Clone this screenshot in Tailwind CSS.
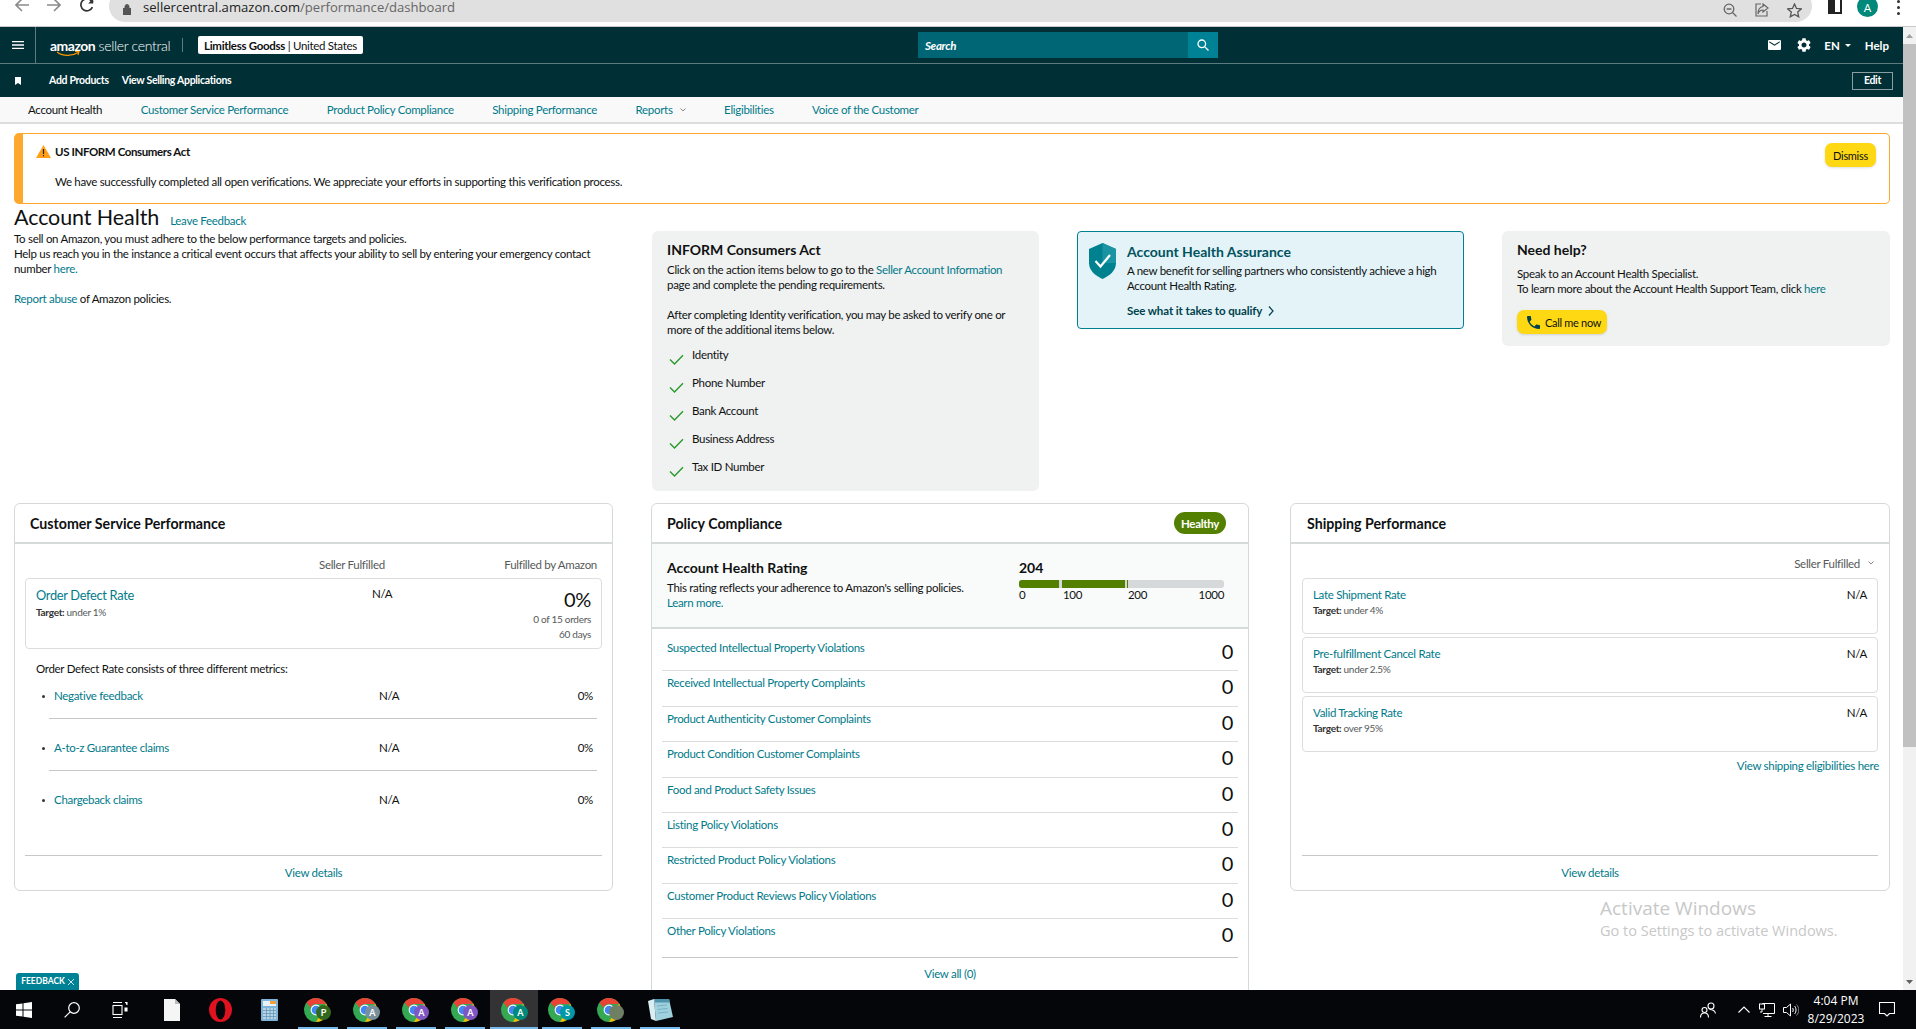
<!DOCTYPE html>
<html lang="en">
<head>
  <meta charset="UTF-8">
  <meta name="viewport" content="width=device-width, initial-scale=1.0">
  <title>Account Health</title>
  <script src="https://cdn.jsdelivr.net/npm/@tailwindcss/browser@4"></script>
</head>
<body>

<svg class="hidden">
  <symbol id="chrome" viewBox="0 0 24 24">
    <circle cx="12" cy="12" r="12" fill="#34a853"/>
    <path d="M12 0a12 12 0 0 1 10.4 6H12a6 6 0 0 0-5.6 3.8L2.6 4.4A12 12 0 0 1 12 0z" fill="#ea4335"/>
    <path d="M22.4 6A12 12 0 0 1 12 24l5.2-9A6 6 0 0 0 17.2 9z" fill="#fbbc04"/>
    <circle cx="12" cy="12" r="5.4" fill="#fff"/>
    <circle cx="12" cy="12" r="4.3" fill="#4285f4"/>
  </symbol>
  <symbol id="check" viewBox="0 0 15 11">
    <path d="M1 5.5 5.5 10 14 1.2" fill="none" stroke="#2a9a2a" stroke-width="1.4"/>
  </symbol>
</svg>

<div class="flex flex-col w-[1916px] h-[1029px] overflow-hidden relative bg-white text-[#0f1111] text-[11.5px] leading-[15px] tracking-[-0.3px] [font-family:Lato,sans-serif]">

  <!-- browser toolbar -->
  <div class="flex items-start h-[27px] shrink-0 border-b border-[#c9c9c9] overflow-hidden tracking-normal">
    <svg class="w-[14px] h-[14px] ml-[15px] mt-[-2px]" viewBox="0 0 14 14" fill="none" stroke="#8a8a8a" stroke-width="1.6"><path d="M14 7H1M7 1 1 7l6 6"/></svg>
    <svg class="w-[14px] h-[14px] ml-[18px] mt-[-2px]" viewBox="0 0 14 14" fill="none" stroke="#8a8a8a" stroke-width="1.6"><path d="M0 7h13M7 1l6 6-6 6"/></svg>
    <svg class="w-[14px] h-[14px] ml-[19px] mt-[-2px]" viewBox="0 0 14 14" fill="none" stroke="#333" stroke-width="1.7"><path d="M12.4 9.2A6 6 0 1 1 11.2 2.6L13 4.4"/><path d="M13.2.4v5h-5z" fill="#333" stroke="none"/></svg>
    <div class="flex items-center w-[1703px] h-[32px] mt-[-10px] ml-[15px] rounded-[16px] bg-[#e0e0e0]">
      <svg class="w-[8px] h-[11px] ml-[14px] mt-[7px]" viewBox="0 0 8 11"><path d="M0 4.5h8V11H0zM2 4.5V2.6a2 2 0 0 1 4 0v1.9" fill="#555" stroke="#555"/></svg>
      <span class="ml-[12px] mt-[3px] text-[13.1px] text-[#222] [font-family:'Open_Sans',sans-serif]">sellercentral.amazon.com<span class="text-[#666]">/performance/dashboard</span></span>
      <div class="flex items-center ml-auto mt-[8px] mr-[10px] gap-[18px]">
        <svg class="w-[14px] h-[14px]" viewBox="0 0 14 14" fill="none" stroke="#666" stroke-width="1.3"><circle cx="6" cy="6" r="4.8"/><path d="M3.6 6h4.8M9.5 9.5 13.5 13.500"/></svg>
        <svg class="w-[14px] h-[14px]" viewBox="0 0 14 14" fill="none" stroke="#666" stroke-width="1.2"><path d="M6 1H1v12h11V8M8 1l5 4-5 4V7C6 7 4 8 3 11c0-4 2-7 5-7.500z"/></svg>
        <svg class="w-[15px] h-[15px]" viewBox="0 0 15 15" fill="none" stroke="#555" stroke-width="1.3"><path d="m7.500 1 2 4.400 4.800.5-3.600 3.200 1 4.700-4.200-2.400-4.200 2.400 1-4.700L.7 5.900l4.800-.5z"/></svg>
      </div>
    </div>
    <div class="w-[14px] h-[16px] ml-[16px] mt-[-2px] border-[2px] border-[#222] border-l-[7px]"></div>
    <div class="flex items-center justify-center w-[21px] h-[21px] ml-[15px] mt-[-4px] pt-[2px] rounded-full bg-[#00897b] text-white text-[11px]">A</div>
    <div class="flex flex-col gap-[3px] ml-[19px] mt-[0px]">
      <div class="w-[3px] h-[3px] rounded-full bg-[#333]"></div>
      <div class="w-[3px] h-[3px] rounded-full bg-[#333]"></div>
      <div class="w-[3px] h-[3px] rounded-full bg-[#333]"></div>
    </div>
  </div>

  <div class="flex flex-1 min-h-0">
    <div class="w-[1903px] shrink-0 overflow-hidden">

      <!-- top header -->
      <header class="flex items-center h-[37px] border-b border-[#5d7a7f] bg-[#002f36] text-white">
        <div class="flex items-center justify-center w-[36px] h-full border-r border-[#5d7a7f]">
          <svg class="w-[12px] h-[8px]" viewBox="0 0 12 8" fill="#fff"><path d="M0 0h12v1.300H0zM0 3.350h12v1.300H0zM0 6.700h12V8H0z"/></svg>
        </div>
        <div class="relative ml-[14px] w-[120px] text-[14px] tracking-[-0.3px] whitespace-nowrap">
          <span class="font-bold tracking-[-0.5px]">amazon</span> <span class="font-light">seller central</span>
          <svg class="absolute left-[7px] top-[13px] w-[24px] h-[6px]" viewBox="0 0 24 6" fill="none" stroke="#ff9900" stroke-width="1.200"><path d="M0 1c6 4.500 15 4.500 21 .5M18 .5l4 0-1 3.500"/></svg>
        </div>
        <div class="w-px h-[14px] ml-[12px] bg-[#5d7a7f]"></div>
        <div class="flex items-center justify-center w-[165px] h-[18px] ml-[15px] rounded-[2px] bg-white text-[#0f1111] whitespace-nowrap"><b>Limitless Goodss</b>&nbsp;|&nbsp;United States</div>
        <div class="flex ml-[555px]">
          <div class="flex items-center w-[270px] h-[26px] pl-[7px] bg-[#006574] italic font-bold">Search</div>
          <div class="flex items-center justify-center w-[30px] h-[26px] bg-[#008296]">
            <svg class="w-[12px] h-[12px]" viewBox="0 0 12 12" fill="none" stroke="#fff" stroke-width="1.300"><circle cx="4.800" cy="4.800" r="3.800"/><path d="m7.600 7.600 3.900 3.900"/></svg>
          </div>
        </div>
        <div class="flex items-center ml-auto pr-[14px] font-bold tracking-normal">
          <svg class="w-[13px] h-[10px]" viewBox="2 4 20 16" preserveAspectRatio="none" fill="#fff"><path d="M20 4H4c-1.100 0-2 .9-2 2v12c0 1.100.9 2 2 2h16c1.100 0 2-.9 2-2V6c0-1.100-.9-2-2-2zm0 4-8 5-8-5V6l8 5 8-5v2z"/></svg>
          <svg class="w-[14px] h-[14px] ml-[16px]" viewBox="2 2 20 20" fill="#fff"><path d="M19.140 12.940c.04-.3.06-.61.06-.94 0-.32-.02-.64-.07-.94l2.030-1.580a.49.49 0 0 0 .12-.61l-1.920-3.320a.488.488 0 0 0-.59-.22l-2.390.96c-.5-.38-1.030-.7-1.620-.94l-.36-2.540a.484.484 0 0 0-.48-.41h-3.840c-.24 0-.43.17-.47.41l-.36 2.540c-.59.24-1.130.57-1.620.94l-2.390-.96c-.22-.08-.47 0-.59.22L2.740 8.870c-.12.21-.08.47.12.61l2.030 1.580c-.05.3-.09.63-.09.94s.02.64.07.94l-2.030 1.580a.49.49 0 0 0-.12.61l1.920 3.320c.12.22.37.29.59.22l2.390-.96c.5.38 1.030.7 1.620.94l.36 2.540c.05.24.24.41.48.41h3.840c.24 0 .44-.17.47-.41l.36-2.540c.59-.24 1.130-.56 1.620-.94l2.390.96c.22.08.47 0 .59-.22l1.920-3.320c.12-.22.07-.47-.12-.61l-2.010-1.580zM12 15.600c-1.980 0-3.600-1.620-3.600-3.600s1.620-3.600 3.600-3.600 3.600 1.620 3.600 3.600-1.620 3.600-3.600 3.600z"/></svg>
          <span class="ml-[13px]">EN</span>
          <svg class="w-[6px] h-[3px] ml-[5px]" viewBox="0 0 6 3" fill="#fff"><path d="M0 0h6L3 3z"/></svg>
          <span class="ml-[14px]">Help</span>
        </div>
      </header>

      <!-- favorites bar -->
      <div class="flex items-center h-[33px] bg-[#002f36] text-white font-bold text-[10.5px]">
        <svg class="w-[6px] h-[8px] ml-[15px]" viewBox="0 0 6 8" fill="#fff"><path d="M0 0h6v8L3 6 0 8z"/></svg>
        <span class="ml-[28px]">Add Products</span>
        <span class="ml-[13px]">View Selling Applications</span>
        <div class="flex items-center justify-center w-[41px] h-[18px] ml-auto mr-[10px] border border-[#8a9ea2]">Edit</div>
      </div>

      <!-- tabs -->
      <nav class="flex items-center gap-[38.500px] h-[27px] pl-[28px] bg-[#f9f9f9] border-b-2 border-[#dddddd] text-[#007a8a] whitespace-nowrap">
        <span class="text-[#0f1111]">Account Health</span>
        <span>Customer Service Performance</span>
        <span>Product Policy Compliance</span>
        <span>Shipping Performance</span>
        <span class="flex items-center">Reports
          <svg class="w-[6px] h-[4px] ml-[7px]" viewBox="0 0 6 4" fill="none" stroke="#888"><path d="m.5.5 2.500 2.500L5.500.5"/></svg>
        </span>
        <span>Eligibilities</span>
        <span>Voice of the Customer</span>
      </nav>

      <main class="pl-[14px] pr-[13px]">
        <!-- alert -->
        <div class="relative h-[71px] mt-[9px] pl-[32px] pt-[10px] border border-l-[9px] border-[#ffa82e] rounded-[5px]">
          <svg class="absolute left-[13px] top-[11px] w-[15px] h-[13px]" viewBox="0 0 15 13"><path d="M7.500 0 15 13H0z" fill="#ff9f1a"/><path d="M6.900 4h1.200v5H6.900zM6.900 10h1.200v1.300H6.900z" fill="#222"/></svg>
          <div class="font-bold tracking-[-0.4px]">US INFORM Consumers Act</div>
          <div class="mt-[15px]">We have successfully completed all open verifications. We appreciate your efforts in supporting this verification process.</div>
          <div class="absolute right-[13px] top-[9px] flex items-center justify-center w-[51px] h-[24px] rounded-[7px] bg-[#ffd814] text-[11px] shadow-sm">Dismiss</div>
        </div>

        <!-- intro row -->
        <div class="flex items-start gap-[38px]">
          <div class="w-[600px]">
            <div class="flex items-end h-[26px]">
              <h1 class="text-[21.500px] leading-[26px] tracking-[-0.1px]">Account Health</h1>
              <span class="ml-[11px] mb-[2px] text-[#007a8a]">Leave Feedback</span>
            </div>
            <p class="mt-[1px]">To sell on Amazon, you must adhere to the below performance targets and policies.<br>Help us reach you in the instance a critical event occurs that affects your ability to sell by entering your emergency contact<br>number <span class="text-[#007a8a]">here.</span></p>
            <p class="mt-[15px]"><span class="text-[#007a8a]">Report abuse</span> of Amazon policies.</p>
          </div>

          <div class="w-[387px] h-[260px] mt-[27px] px-[15px] pt-[10px] rounded-[6px] bg-[#f0f1f1]">
            <h3 class="text-[14px] leading-[17px] font-bold tracking-normal">INFORM Consumers Act</h3>
            <p class="mt-[4px]">Click on the action items below to go to the <span class="text-[#007a8a]">Seller Account Information</span><br>page and complete the pending requirements.</p>
            <p class="mt-[15px]">After completing Identity verification, you may be asked to verify one or<br>more of the additional items below.</p>
            <ul class="mt-[10px]">
              <li class="flex h-[28px]"><svg class="w-[15px] h-[11px] mt-[7px] ml-[2px]"><use href="#check"/></svg><span class="ml-[8px]">Identity</span></li>
              <li class="flex h-[28px]"><svg class="w-[15px] h-[11px] mt-[7px] ml-[2px]"><use href="#check"/></svg><span class="ml-[8px]">Phone Number</span></li>
              <li class="flex h-[28px]"><svg class="w-[15px] h-[11px] mt-[7px] ml-[2px]"><use href="#check"/></svg><span class="ml-[8px]">Bank Account</span></li>
              <li class="flex h-[28px]"><svg class="w-[15px] h-[11px] mt-[7px] ml-[2px]"><use href="#check"/></svg><span class="ml-[8px]">Business Address</span></li>
              <li class="flex h-[28px]"><svg class="w-[15px] h-[11px] mt-[7px] ml-[2px]"><use href="#check"/></svg><span class="ml-[8px]">Tax ID Number</span></li>
            </ul>
          </div>

          <div class="flex w-[387px] h-[98px] mt-[27px] pl-[11px] pt-[11px] border border-[#007f93] rounded-[4px] bg-[#e3f3f8]">
            <svg class="w-[27px] h-[36px] shrink-0" viewBox="0 0 27 36">
              <path d="M13.500 0 27 6v14c0 8-7 13-13.500 16C7 33 0 28 0 20V6z" fill="#00818f"/>
              <path d="M13.500 0 27 6v14H13.500z" fill="#1a94a3"/>
              <path d="m6.500 18 5 5.500L21 12" fill="none" stroke="#fff" stroke-width="2.200"/>
            </svg>
            <div class="ml-[11px]">
              <h3 class="text-[14px] leading-[17px] font-bold tracking-normal text-[#00525e]">Account Health Assurance</h3>
              <p class="mt-[3px]">A new benefit for selling partners who consistently achieve a high<br>Account Health Rating.</p>
              <div class="flex items-center mt-[10px] font-bold tracking-[-0.1px] text-[#00424c]">See what it takes to qualify
                <svg class="w-[6px] h-[10px] ml-[6px]" viewBox="0 0 6 10" fill="none" stroke="#00424c" stroke-width="1.300"><path d="m1 .5 4 4.500-4 4.500"/></svg>
              </div>
            </div>
          </div>

          <div class="w-[388px] h-[115px] mt-[27px] px-[15px] pt-[10px] rounded-[6px] bg-[#f0f1f1]">
            <h3 class="text-[14px] leading-[17px] font-bold tracking-normal">Need help?</h3>
            <p class="mt-[8px]">Speak to an Account Health Specialist.<br>To learn more about the Account Health Support Team, click <span class="text-[#007a8a]">here</span></p>
            <div class="flex items-center w-[90px] h-[24px] mt-[14px] pl-[10px] rounded-[7px] bg-[#ffd814] text-[11px] shadow-sm">
              <svg class="w-[13px] h-[13px] mr-[5px]" viewBox="3 3 18 18" fill="#00424c"><path d="M6.620 10.790c1.440 2.830 3.760 5.140 6.590 6.590l2.200-2.200c.27-.27.67-.36 1.020-.24 1.120.37 2.330.57 3.570.57.55 0 1 .45 1 1V20c0 .55-.45 1-1 1-9.390 0-17-7.610-17-17 0-.55.45-1 1-1h3.500c.55 0 1 .45 1 1 0 1.250.2 2.450.57 3.570.11.35.03.74-.25 1.020l-2.200 2.200z"/></svg>
              Call me now
            </div>
          </div>
        </div>

        <!-- metric cards -->
        <div class="flex items-start mt-[12px]">

          <section class="flex flex-col w-[599px] h-[388px] border border-[#d5d9d9] rounded-[6px]">
            <div class="flex items-center h-[40px] shrink-0 pl-[15px] border-b-2 border-[#d5dbdb]">
              <h2 class="text-[14.200px] font-bold tracking-normal">Customer Service Performance</h2>
            </div>
            <div class="flex h-[34px] shrink-0 pt-[13px] text-[#565959]">
              <span class="ml-[304px]">Seller Fulfilled</span>
              <span class="ml-auto mr-[15px]">Fulfilled by Amazon</span>
            </div>
            <div class="flex h-[71px] shrink-0 mx-[10px] px-[10px] border border-[#dddddd] rounded-[4px]">
              <div class="w-[336px] pt-[9px]">
                <div class="text-[12.800px] text-[#007a8a]">Order Defect Rate</div>
                <div class="mt-[2px] text-[10px] text-[#565959]"><b class="text-[#333]">Target:</b> under 1%</div>
              </div>
              <div class="pt-[7px]">N/A</div>
              <div class="ml-auto pt-[8px] text-right text-[10px] text-[#565959]">
                <div class="text-[20px] leading-[24px] text-[#0f1111]">0%</div>
                <div class="mt-[1px]">0 of 15 orders</div>
                <div>60 days</div>
              </div>
            </div>
            <div class="mt-[12px] ml-[21px]">Order Defect Rate consists of three different metrics:</div>
            <ul class="mt-[12px]">
              <li class="flex h-[31px] ml-[34px] mr-[15px] border-b border-[#c4c8c8]">
                <span class="w-[330px] pl-[5px] text-[#007a8a]"><span class="inline-block w-[3px] h-[3px] mr-[9px] ml-[-12px] mb-[2px] rounded-full bg-[#333]"></span>Negative feedback</span><span>N/A</span><span class="ml-auto mr-[4px]">0%</span>
              </li>
              <li class="flex h-[52px] pt-[21px] ml-[34px] mr-[15px] border-b border-[#c4c8c8]">
                <span class="w-[330px] pl-[5px] text-[#007a8a]"><span class="inline-block w-[3px] h-[3px] mr-[9px] ml-[-12px] mb-[2px] rounded-full bg-[#333]"></span>A-to-z Guarantee claims</span><span>N/A</span><span class="ml-auto mr-[4px]">0%</span>
              </li>
              <li class="flex h-[52px] pt-[21px] ml-[34px] mr-[15px]">
                <span class="w-[330px] pl-[5px] text-[#007a8a]"><span class="inline-block w-[3px] h-[3px] mr-[9px] ml-[-12px] mb-[2px] rounded-full bg-[#333]"></span>Chargeback claims</span><span>N/A</span><span class="ml-auto mr-[4px]">0%</span>
              </li>
            </ul>
            <div class="flex items-center justify-center h-[35px] pb-[2px] mt-auto mx-[10px] border-t border-[#c4c8c8] text-[#007a8a]">View details</div>
          </section>

          <section class="w-[598px] h-[520px] ml-[38px] border border-[#d5d9d9] rounded-t-[6px]">
            <div class="flex items-center justify-between h-[40px] px-[15px] pr-[22px] border-b-2 border-[#d5dbdb]">
              <h2 class="text-[14.200px] font-bold tracking-normal">Policy Compliance</h2>
              <span class="flex items-center justify-center w-[52px] h-[22px] rounded-full bg-[#538000] text-white font-bold">Healthy</span>
            </div>
            <div class="flex h-[85px] px-[15px] pt-[15px] bg-[#f9fafa] border-b-2 border-[#d5dbdb]">
              <div class="w-[352px]">
                <h3 class="text-[14px] leading-[17px] font-bold tracking-normal">Account Health Rating</h3>
                <p class="mt-[4px]">This rating reflects your adherence to Amazon's selling policies.<br><span class="text-[#007a8a]">Learn more.</span></p>
              </div>
              <div class="w-[205px]">
                <div class="text-[14px] leading-[17px] font-bold tracking-normal">204</div>
                <div class="flex h-[8px] mt-[4px] rounded-[3px] overflow-hidden bg-[#d5d9d9]">
                  <div class="w-[40px] bg-[#538000]"></div>
                  <div class="w-[63px] ml-[3px] bg-[#538000]"></div>
                  <div class="w-[1px] ml-[2px] bg-[#538000]"></div>
                </div>
                <div class="relative h-[12px] leading-[12px] mt-[1px]">
                  <span class="absolute left-0">0</span>
                  <span class="absolute left-[44px]">100</span>
                  <span class="absolute left-[109px]">200</span>
                  <span class="absolute right-0">1000</span>
                </div>
              </div>
            </div>
            <ul class="mx-[10px] pt-[7px] text-[#007a8a]">
              <li class="flex justify-between h-[35.400px] pt-[4px] px-[5px] border-b border-[#dddddd]">Suspected Intellectual Property Violations<span class="mt-[-1px] text-[20px] leading-[24px] text-[#0f1111]">0</span></li>
              <li class="flex justify-between h-[35.400px] pt-[4px] px-[5px] border-b border-[#dddddd]">Received Intellectual Property Complaints<span class="mt-[-1px] text-[20px] leading-[24px] text-[#0f1111]">0</span></li>
              <li class="flex justify-between h-[35.400px] pt-[4px] px-[5px] border-b border-[#dddddd]">Product Authenticity Customer Complaints<span class="mt-[-1px] text-[20px] leading-[24px] text-[#0f1111]">0</span></li>
              <li class="flex justify-between h-[35.400px] pt-[4px] px-[5px] border-b border-[#dddddd]">Product Condition Customer Complaints<span class="mt-[-1px] text-[20px] leading-[24px] text-[#0f1111]">0</span></li>
              <li class="flex justify-between h-[35.400px] pt-[4px] px-[5px] border-b border-[#dddddd]">Food and Product Safety Issues<span class="mt-[-1px] text-[20px] leading-[24px] text-[#0f1111]">0</span></li>
              <li class="flex justify-between h-[35.400px] pt-[4px] px-[5px] border-b border-[#dddddd]">Listing Policy Violations<span class="mt-[-1px] text-[20px] leading-[24px] text-[#0f1111]">0</span></li>
              <li class="flex justify-between h-[35.400px] pt-[4px] px-[5px] border-b border-[#dddddd]">Restricted Product Policy Violations<span class="mt-[-1px] text-[20px] leading-[24px] text-[#0f1111]">0</span></li>
              <li class="flex justify-between h-[35.400px] pt-[4px] px-[5px] border-b border-[#dddddd]">Customer Product Reviews Policy Violations<span class="mt-[-1px] text-[20px] leading-[24px] text-[#0f1111]">0</span></li>
              <li class="flex justify-between h-[39px] pt-[4px] px-[5px] border-b border-[#c4c8c8]">Other Policy Violations<span class="mt-[-1px] text-[20px] leading-[24px] text-[#0f1111]">0</span></li>
            </ul>
            <div class="flex items-center justify-center h-[30px] text-[#007a8a]">View all (0)</div>
          </section>

          <section class="flex flex-col w-[600px] h-[388px] ml-[41px] border border-[#d5d9d9] rounded-[6px]">
            <div class="flex items-center h-[40px] shrink-0 pl-[16px] border-b-2 border-[#d5dbdb]">
              <h2 class="text-[14.200px] font-bold tracking-normal">Shipping Performance</h2>
            </div>
            <div class="flex items-center justify-end h-[34px] shrink-0 pt-[4px] pr-[15px] text-[#565959]">Seller Fulfilled
              <svg class="w-[6px] h-[4px] ml-[8px]" viewBox="0 0 6 4" fill="none" stroke="#888"><path d="m.5.500 2.500 2.500L5.500.5"/></svg>
            </div>
            <div class="flex flex-col gap-[3px] mx-[11px]">
              <div class="flex h-[56px] px-[10px] pt-[8px] border border-[#dddddd] rounded-[4px]">
                <div class="w-[450px]"><div class="text-[#007a8a]">Late Shipment Rate</div><div class="mt-[1px] text-[10px] text-[#565959]"><b class="text-[#333]">Target:</b> under 4%</div></div>
                <span class="ml-auto">N/A</span>
              </div>
              <div class="flex h-[56px] px-[10px] pt-[8px] border border-[#dddddd] rounded-[4px]">
                <div class="w-[450px]"><div class="text-[#007a8a]">Pre-fulfillment Cancel Rate</div><div class="mt-[1px] text-[10px] text-[#565959]"><b class="text-[#333]">Target:</b> under 2.5%</div></div>
                <span class="ml-auto">N/A</span>
              </div>
              <div class="flex h-[56px] px-[10px] pt-[8px] border border-[#dddddd] rounded-[4px]">
                <div class="w-[450px]"><div class="text-[#007a8a]">Valid Tracking Rate</div><div class="mt-[1px] text-[10px] text-[#565959]"><b class="text-[#333]">Target:</b> over 95%</div></div>
                <span class="ml-auto">N/A</span>
              </div>
            </div>
            <div class="mt-[6px] mr-[10px] text-right text-[#007a8a]">View shipping eligibilities here</div>
            <div class="flex items-center justify-center h-[35px] pb-[2px] mt-auto mx-[11px] border-t border-[#c4c8c8] text-[#007a8a]">View details</div>
          </section>
        </div>
      </main>
    </div>

    <!-- scrollbar -->
    <div class="flex flex-col w-[13px] shrink-0 bg-[#f1f1f1]">
      <div class="flex items-center justify-center h-[17px]">
        <svg class="w-[7px] h-[4px]" viewBox="0 0 7 4" fill="#a0a0a0"><path d="M3.500 0 7 4H0z"/></svg>
      </div>
      <div class="h-[703px] bg-[#c1c1c1]"></div>
      <div class="flex items-center justify-center h-[17px] mt-auto">
        <svg class="w-[7px] h-[4px]" viewBox="0 0 7 4" fill="#606060"><path d="M0 0h7L3.500 4z"/></svg>
      </div>
    </div>
  </div>

  <!-- windows taskbar -->
  <div class="flex h-[39px] shrink-0 bg-[#05060a] text-white tracking-normal">
    <div class="flex items-center justify-center w-[48px]">
      <svg class="w-[16px] h-[16px]" viewBox="0 0 16 16" fill="#fff"><path d="M0 2.300 6.500 1.400V7.500H0zM7.500 1.200 16 0V7.500H7.500zM0 8.500h6.500v6.100L0 13.700zM7.500 8.500H16V16l-8.500-1.200z"/></svg>
    </div>
    <div class="flex items-center justify-center w-[48px]">
      <svg class="w-[16px] h-[16px]" viewBox="0 0 16 16" fill="none" stroke="#fff" stroke-width="1.200"><circle cx="10" cy="6" r="5.300"/><path d="M6.200 9.800 .6 15.400"/></svg>
    </div>
    <div class="flex items-center justify-center w-[48px]">
      <svg class="w-[16px] h-[16px]" viewBox="0 0 16 16" fill="none" stroke="#fff" stroke-width="1.100"><path d="M1 .5h9M1 15.500h9"/><rect x="1" y="3.500" width="9" height="9"/><path d="M13 .5h2v2.500M13 6h2v3h-2z" fill="#fff"/></svg>
    </div>
    <div class="flex items-center justify-center w-[49px] ml-[3px]">
      <svg class="w-[16px] h-[22px]" viewBox="0 0 16 22"><path d="M0 0h11l5 5v17H0z" fill="#f5f5f5"/><path d="M11 0v5h5z" fill="#bbb"/></svg>
    </div>
    <div class="flex items-center justify-center w-[49px]">
      <svg class="w-[23px] h-[24px]" viewBox="0 0 23 24"><ellipse cx="11.500" cy="12" rx="11.500" ry="12" fill="#e0121f"/><ellipse cx="11.500" cy="12" rx="4.800" ry="9.500" fill="#05060a"/></svg>
    </div>
    <div class="flex items-center justify-center w-[49px]">
      <svg class="w-[17px] h-[22px]" viewBox="0 0 17 22"><rect width="17" height="22" rx="1" fill="#7fb4d8"/><rect x="2" y="2" width="13" height="5" fill="#e8f2f8"/><path d="M9 2h6v3H9z" fill="#f0a040"/><path d="M2 9h13v11H2z" fill="#b6d4e6"/><path d="M2 11.500h13M2 14.500h13M2 17.500h13M5.500 9v11M9 9v11M12.500 9v11" stroke="#5b8fb3" stroke-width=".7"/></svg>
    </div>

    <div class="relative flex items-center justify-center w-[49px]">
      <svg class="w-[24px] h-[24px] mr-[5px]"><use href="#chrome"/></svg>
      <span class="absolute left-[22px] top-[15px] flex items-center justify-center w-[15px] h-[15px] rounded-full bg-[#33691e] text-[9px] font-bold">P</span>
      <div class="absolute left-[4px] right-[5px] bottom-0 h-[2px] bg-[#76b9ed]"></div>
    </div>
    <div class="relative flex items-center justify-center w-[49px]">
      <svg class="w-[24px] h-[24px] mr-[5px]"><use href="#chrome"/></svg>
      <span class="absolute left-[22px] top-[15px] flex items-center justify-center w-[15px] h-[15px] rounded-full bg-[#78909c] text-[9px] font-bold">A</span>
      <div class="absolute left-[4px] right-[5px] bottom-0 h-[2px] bg-[#76b9ed]"></div>
    </div>
    <div class="relative flex items-center justify-center w-[49px]">
      <svg class="w-[24px] h-[24px] mr-[5px]"><use href="#chrome"/></svg>
      <span class="absolute left-[22px] top-[15px] flex items-center justify-center w-[15px] h-[15px] rounded-full bg-[#7e57c2] text-[9px] font-bold">A</span>
      <div class="absolute left-[4px] right-[5px] bottom-0 h-[2px] bg-[#76b9ed]"></div>
    </div>
    <div class="relative flex items-center justify-center w-[49px]">
      <svg class="w-[24px] h-[24px] mr-[5px]"><use href="#chrome"/></svg>
      <span class="absolute left-[22px] top-[15px] flex items-center justify-center w-[15px] h-[15px] rounded-full bg-[#7e57c2] text-[9px] font-bold">A</span>
      <div class="absolute left-[4px] right-[5px] bottom-0 h-[2px] bg-[#76b9ed]"></div>
    </div>
    <div class="relative flex items-center justify-center w-[48px] bg-[#333336]">
      <svg class="w-[24px] h-[24px] mr-[2px]"><use href="#chrome"/></svg>
      <span class="absolute left-[23px] top-[15px] flex items-center justify-center w-[15px] h-[15px] rounded-full bg-[#00897b] text-[9px] font-bold">A</span>
      <div class="absolute left-0 right-0 bottom-0 h-[2px] bg-[#76b9ed]"></div>
    </div>
    <div class="relative flex items-center justify-center w-[49px]">
      <svg class="w-[24px] h-[24px] mr-[5px]"><use href="#chrome"/></svg>
      <span class="absolute left-[22px] top-[15px] flex items-center justify-center w-[15px] h-[15px] rounded-full bg-[#0097a7] text-[9px] font-bold">S</span>
      <div class="absolute left-[4px] right-[5px] bottom-0 h-[2px] bg-[#76b9ed]"></div>
    </div>
    <div class="relative flex items-center justify-center w-[49px]">
      <svg class="w-[24px] h-[24px] mr-[5px]"><use href="#chrome"/></svg>
      <span class="absolute left-[22px] top-[15px] w-[15px] h-[15px] rounded-full bg-[#6f7f63]"></span>
      <div class="absolute left-[4px] right-[5px] bottom-0 h-[2px] bg-[#76b9ed]"></div>
    </div>
    <div class="relative flex items-center justify-center w-[49px]">
      <svg class="w-[25px] h-[24px]" viewBox="0 0 25 24"><path d="M6 1h15l4 18-17 4z" fill="#9fd0dd"/><path d="M6 1h15l.8 3.500H7z" fill="#4f93ab"/><path d="m9 8 10-1M9.500 11.500l10-1M10 15l10-1" stroke="#6aa9bd" stroke-width=".8"/><path d="M0 3l6-2 2 22-5-2z" fill="#d9eef3"/></svg>
      <div class="absolute left-[4px] right-[5px] bottom-0 h-[2px] bg-[#76b9ed]"></div>
    </div>

    <div class="flex items-center ml-auto">
      <svg class="w-[16px] h-[16px]" viewBox="0 0 16 16" fill="none" stroke="#fff" stroke-width="1.100"><circle cx="11" cy="4" r="3"/><circle cx="4.500" cy="8" r="2.500"/><path d="M.5 15.500c0-3 1.500-4.500 4-4.500s4 1.500 4 4.500M9.500 7.500c3 0 5.500 1 6 4"/></svg>
      <svg class="w-[12px] h-[7px] ml-[22px]" viewBox="0 0 12 7" fill="none" stroke="#fff" stroke-width="1.100"><path d="m.5 6.500 5.500-5.500 5.500 5.500"/></svg>
      <svg class="w-[16px] h-[14px] ml-[9px]" viewBox="0 0 16 14" fill="none" stroke="#fff" stroke-width="1"><path d="M3.500 4V.5h12v10H4M9 10.500V13M5.500 13.500h7"/><rect x=".5" y="1" width="5" height="5" fill="#05060a"/><path d="M3 6v3H1"/></svg>
      <svg class="w-[16px] h-[14px] ml-[8px]" viewBox="0 0 16 14" fill="none" stroke="#fff" stroke-width="1"><path d="M.5 4.500h3l4-3.500v12l-4-3.500h-3z"/><path d="M9.500 5c1 1 1 3 0 4M11.500 3c2 2 2 6 0 8" /><path d="M13.500 1.500c3 3 3 8 0 11" stroke="#888"/></svg>
      <div class="w-[74px] text-center text-[12px] leading-[18px] [font-family:'Open_Sans',sans-serif]">4:04 PM<br>8/29/2023</div>
      <svg class="w-[16px] h-[15px] ml-[6px] mr-[21px]" viewBox="0 0 16 15" fill="none" stroke="#fff" stroke-width="1.100"><path d="M.5.500h15v11h-5l-2.500 2.500-2.500-2.500h-5z"/></svg>
    </div>
  </div>

  <!-- overlays -->
  <div class="absolute left-[16px] top-[973px] flex items-center justify-center gap-[3px] w-[63px] h-[17px] rounded-t-[3px] bg-[#008296] text-white text-[8.500px] font-bold tracking-normal">FEEDBACK
    <svg class="w-[6px] h-[6px]" viewBox="0 0 6 6" stroke="#fff" stroke-width=".8"><path d="m0 0 6 6M6 0 0 6"/></svg>
  </div>
  <div class="absolute left-[1600px] top-[895px] tracking-normal text-[#c8c8c8] [font-family:'Open_Sans',sans-serif]">
    <div class="text-[19px] leading-[26px]">Activate Windows</div>
    <div class="text-[14.500px] leading-[20px]">Go to Settings to activate Windows.</div>
  </div>
</div>

</body>
</html>
